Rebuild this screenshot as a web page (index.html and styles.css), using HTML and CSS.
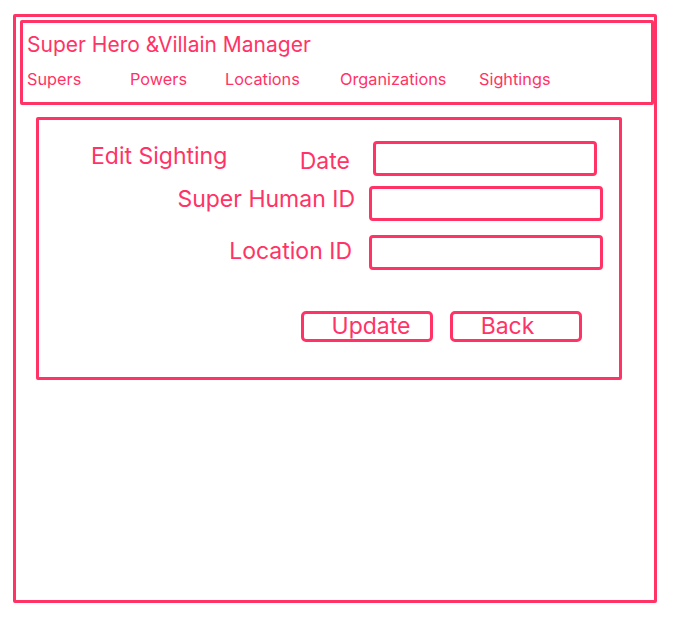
FILE: index.html
```html
<!DOCTYPE html>
<html>
<head>
<meta charset="utf-8">
<link rel="stylesheet" href="styles.css">
</head>
<body>
<div class="frame">
  <header class="header">
    <div class="title">Super Hero &amp;Villain Manager</div>
    <nav class="nav">
      <span class="nav-item n1">Supers</span>
      <span class="nav-item n2">Powers</span>
      <span class="nav-item n3">Locations</span>
      <span class="nav-item n4">Organizations</span>
      <span class="nav-item n5">Sightings</span>
    </nav>
  </header>
  <section class="card">
    <div class="form">
      <div class="label-cell first">
        <span class="heading">Edit Sighting</span>
        <span class="label date-label">Date</span>
      </div>
      <div class="input-cell"><div class="input input-date"></div></div>
      <div class="label-cell second"><span class="label">Super Human ID</span></div>
      <div class="input-cell second"><div class="input"></div></div>
      <div class="label-cell third"><span class="label loc-label">Location ID</span></div>
      <div class="input-cell third"><div class="input"></div></div>
    </div>
    <div class="buttons">
      <div class="btn btn-update">Update</div>
      <div class="btn btn-back">Back</div>
    </div>
  </section>
</div>
</body>
</html>
```
FILE: styles.css
```css
* { box-sizing: border-box; }
body {
  margin: 0;
  background: #ffffff;
  font-family: Inter, "Noto Sans", sans-serif;
  color: #ff3366;
}
.frame {
  margin: 14px 0 0 13px;
  width: 644px;
  height: 589px;
  border: 3px solid #ff3366;
  border-radius: 2px;
  padding: 3px 0 0 4px;
}
.header {
  width: 634px;
  height: 85px;
  border: 3px solid #ff3366;
  border-radius: 2px;
  padding: 8px 0 0 4px;
}
.title {
  font-size: 21px;
  line-height: 28px;
  height: 28px;
}
.nav {
  display: flex;
  margin-top: 10px;
  font-size: 16.3px;
  line-height: 20px;
}
.nav-item { display: block; }
.n1 { width: 103px; }
.n2 { width: 95px; }
.n3 { width: 115px; }
.n4 { width: 139px; }
.card {
  margin: 12px 0 0 16px;
  width: 586px;
  height: 263px;
  border: 3px solid #ff3366;
  border-radius: 2px;
  padding-top: 21px;
}
.form {
  display: grid;
  grid-template-columns: 316px 234px;
  column-gap: 14px;
}
.label-cell {
  display: flex;
  justify-content: flex-end;
  align-items: flex-start;
  font-size: 23px;
  line-height: 30px;
  height: 35px;
}
.label-cell.first {
  justify-content: space-between;
  padding-left: 52px;
  padding-right: 5px;
}
.heading {
  font-size: 23px;
  line-height: 30px;
}
.date-label { margin-top: 5px; line-height: 30px; }
.loc-label { margin-right: 3px; }
.input-cell { display: flex; }
.input {
  width: 234px;
  height: 35px;
  border: 3px solid #ff3366;
  border-radius: 4px;
}
.input-date {
  width: 224px;
  margin-left: 4px;
}
.second { margin-top: 10px; }
.label-cell.second { line-height: 26px; }
.third { margin-top: 14px; }
.label-cell.third { line-height: 32px; }
.buttons {
  display: flex;
  gap: 17px;
  margin: 41px 0 0 262px;
}
.btn {
  width: 132px;
  height: 31px;
  border: 3px solid #ff3366;
  border-radius: 5px;
  font-size: 23px;
  line-height: 25px;
  text-align: center;
}
.btn-update { padding-left: 8px; }
.btn-back { padding-right: 17px; }
```
